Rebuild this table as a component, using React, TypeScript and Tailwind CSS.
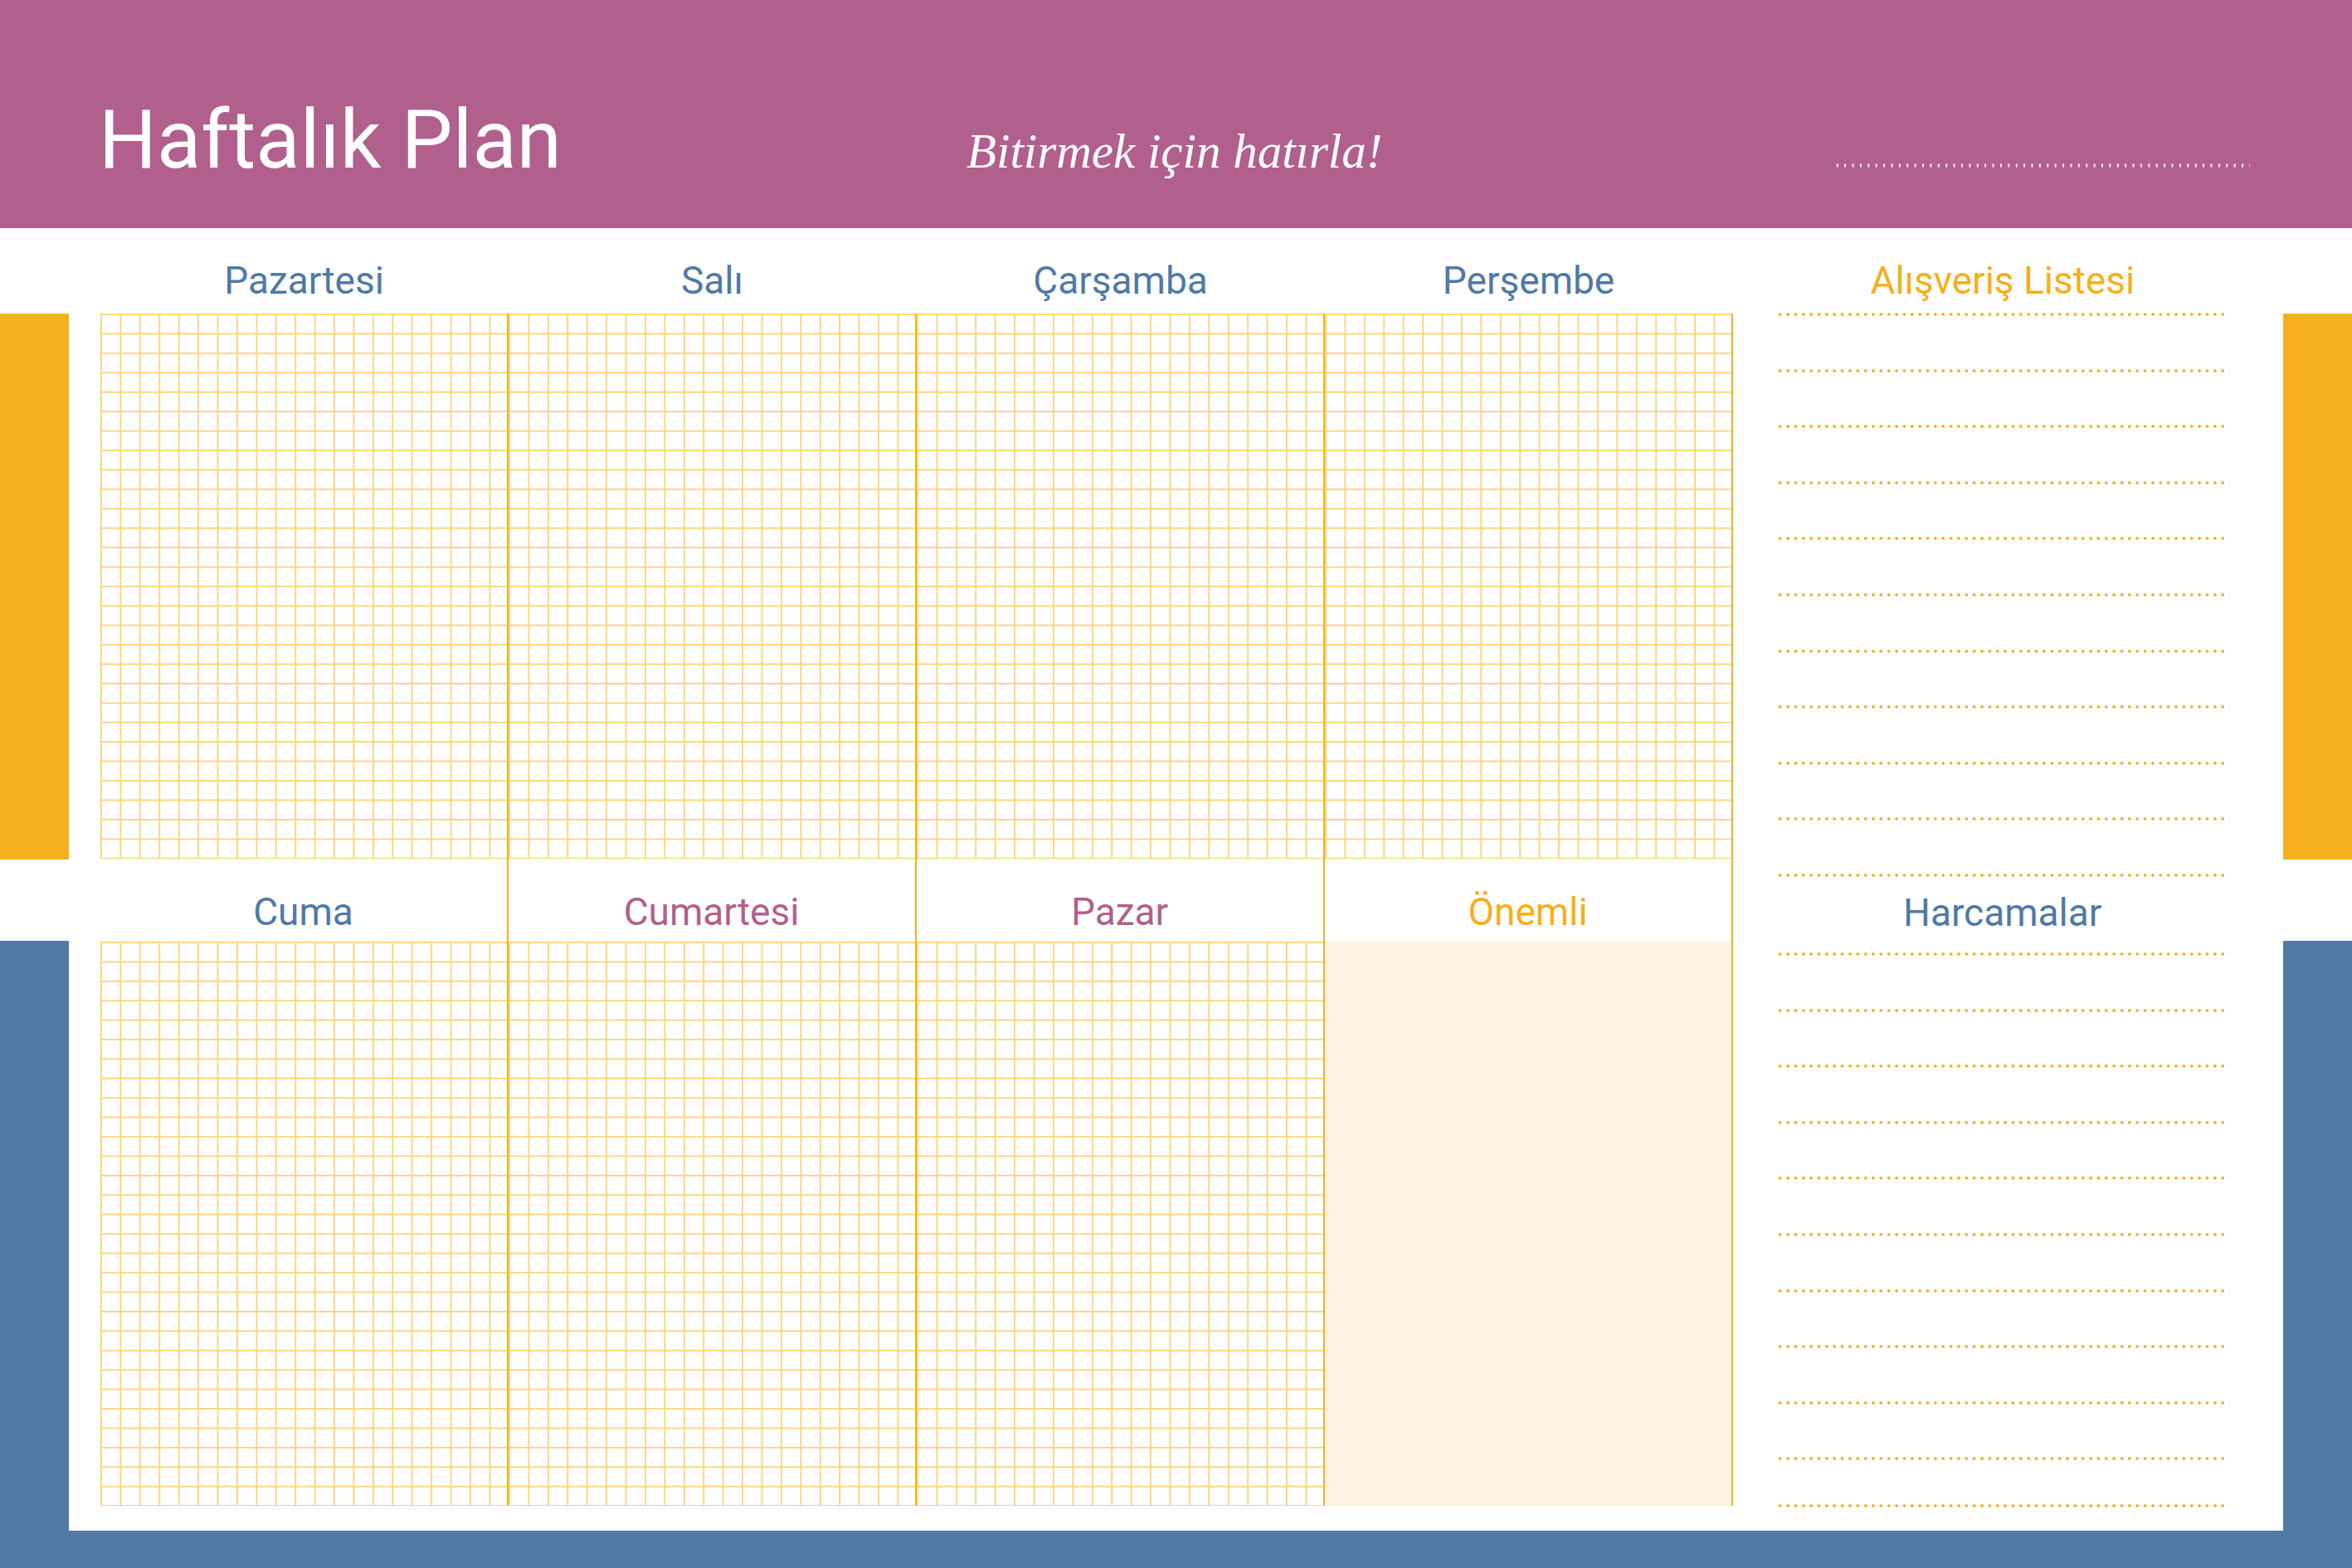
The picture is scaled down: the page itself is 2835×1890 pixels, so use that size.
import React from "react";

const sans = "font-['Roboto','Liberation_Sans',sans-serif]";

const days = [
  { top: "Pazartesi", bottom: "Cuma", bottomColor: "text-[#4f79a6]" },
  { top: "Salı", bottom: "Cumartesi", bottomColor: "text-[#b1608e]" },
  { top: "Çarşamba", bottom: "Pazar", bottomColor: "text-[#b1608e]" },
  { top: "Perşembe", bottom: "Önemli", bottomColor: "text-[#f5af19]", plain: true },
];

function Grid({ className }: { className: string }) {
  return (
    <div
      className={
        "border-b-[1.5px] border-[#fdd67e] bg-[linear-gradient(to_right,#fdd67e_1.5px,transparent_1.5px),linear-gradient(to_bottom,#fdd67e_1.5px,transparent_1.5px)] bg-[length:23.43px_23.43px] " +
        className
      }
    />
  );
}

function Dots() {
  return <div className="h-[4px] w-full bg-[radial-gradient(circle,#f5b11b_1.5px,transparent_2px)] bg-[length:9.36px_4px]" />;
}

function Side() {
  return (
    <div className="flex w-[83px] flex-col">
      <div className="h-[103px] bg-white" />
      <div className="h-[658px] bg-[#f5b11b]" />
      <div className="h-[98px] bg-white" />
      <div className="flex-1 bg-[#517aa4]" />
    </div>
  );
}

export default function App() {
  return (
    <div className={"flex h-[1890px] w-[2835px] flex-col overflow-hidden bg-white " + sans}>
      {/* header */}
      <header className="flex h-[275px] items-baseline bg-[#b1608e] pl-[119px] pt-[120px]">
        <div className="w-[1046px]">
          <h1 className="text-[98px] font-normal leading-none text-white">Haftalık Plan</h1>
        </div>
        <div className="w-[1045px]">
          <p className="font-['Liberation_Serif',serif] text-[59px] italic leading-none text-white">Bitirmek için hatırla!</p>
        </div>
        <div className="h-[5px] w-[502px] bg-[radial-gradient(ellipse_1.4px_2.4px,#ffffff_80%,transparent_100%)] bg-[length:9.4px_5px]" />
      </header>

      <div className="flex flex-1">
        <Side />

        <main className="flex flex-1 bg-white pl-[37.5px]">
          {days.map((d) => (
            <div key={d.top} className="flex w-[492px] flex-col">
              <div className="flex h-[103px] items-end justify-center pb-[17px]">
                <span className="text-[46px] leading-none text-[#4f79a6]">{d.top}</span>
              </div>
              <div className="flex flex-col border-r-2 border-[#f5b11b]">
                <Grid className="h-[657px]" />
                <div className="flex h-[100px] items-end justify-center pb-[13px]">
                  <span className={"text-[46px] leading-none " + d.bottomColor}>{d.bottom}</span>
                </div>
                {d.plain ? <div className="h-[680px] bg-[#fef2e2]" /> : <Grid className="h-[680px]" />}
              </div>
            </div>
          ))}

          {/* lists */}
          <div className="flex flex-1 flex-col pl-[52px] pr-[65px]">
            <div className="flex h-[102px] items-end justify-center pb-[16px]">
              <span className="text-[46px] leading-none text-[#f5af19]">Alışveriş Listesi</span>
            </div>
            <div className="flex flex-col gap-[63.6px]">
              {Array.from({ length: 11 }).map((_, i) => (
                <Dots key={i} />
              ))}
            </div>
            <div className="flex h-[91px] items-end justify-center pb-[25px]">
              <span className="text-[46px] leading-none text-[#4f79a6]">Harcamalar</span>
            </div>
            <div className="flex flex-col gap-[63.6px]">
              {Array.from({ length: 10 }).map((_, i) => (
                <Dots key={i} />
              ))}
            </div>
            <div className="mt-[53px]">
              <Dots />
            </div>
          </div>
        </main>

        <Side />
      </div>

      <div className="h-[45px] bg-[#517aa4]" />
    </div>
  );
}
